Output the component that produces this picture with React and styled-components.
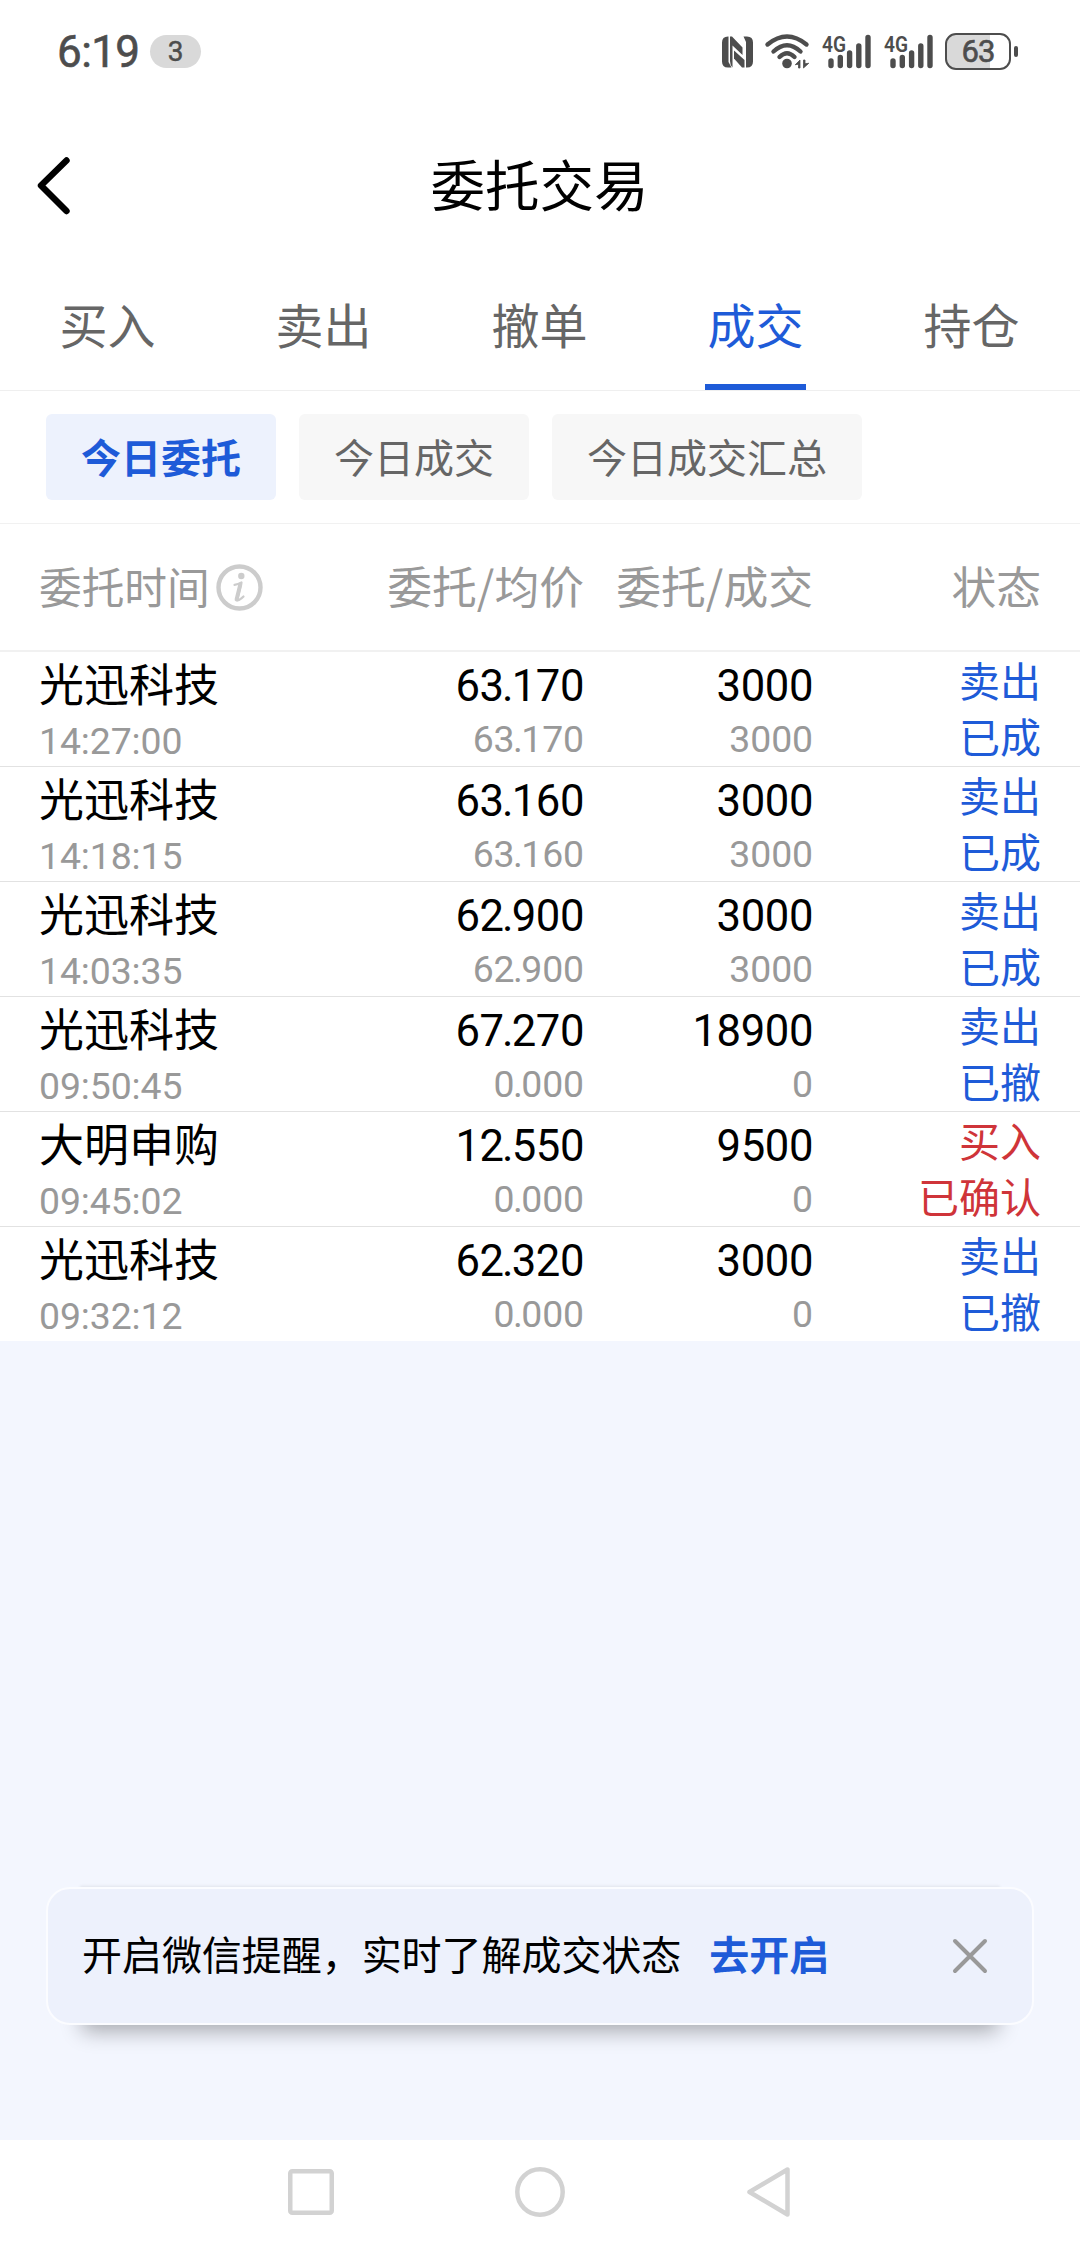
import React from "react";
import styled, { createGlobalStyle } from "styled-components";

const BLUE = "#1e5bd8";
const RED = "#cf3439";

const GlobalStyle = createGlobalStyle`
  * { box-sizing: border-box; }
  html, body { margin: 0; padding: 0; background: #fff; }
  body { font-family: "Noto Sans CJK SC", sans-serif; color: #000; }
  svg { display: block; flex: none; overflow: visible; }
`;

const Screen = styled.div`
  width: 1080px;
  height: 2244px;
  display: flex;
  flex-direction: column;
  background: #fff;
  overflow: hidden;
`;

const StatusBar = styled.header`
  height: 103px;
  flex: none;
  display: flex;
  align-items: center;
  padding: 0 62px 0 57px;
  color: #4d4d4d;
  font-family: Roboto, sans-serif;
`;

const Clock = styled.span`
  width: 93px;
  font-size: 44px;
  line-height: 50px;
  -webkit-text-stroke: 0.6px #4d4d4d;
  letter-spacing: -0.6px;
`;

const CountPill = styled.span`
  width: 51px;
  height: 33px;
  border-radius: 17px;
  background: #d9d9d9;
  font-size: 28px;
  line-height: 34px;
  -webkit-text-stroke: 0.4px #4d4d4d;
  text-align: center;
`;

const StatusIcons = styled.div`
  margin-left: auto;
  display: flex;
  align-items: center;
`;

const Battery = styled.div`
  display: flex;
  align-items: center;
  gap: 3px;
`;

const BatteryBody = styled.div`
  width: 66px;
  height: 37px;
  border: 2.6px solid #4d4d4d;
  border-radius: 11px;
  background: linear-gradient(90deg, #d9d9d9 43px, #fff 43px);
  font-size: 31px;
  line-height: 33px;
  -webkit-text-stroke: 0.6px #4d4d4d;
  text-align: center;
  letter-spacing: -0.8px;
`;

const BatteryNub = styled.div`
  width: 4px;
  height: 11px;
  border-radius: 2px;
  background: #4d4d4d;
`;

const TitleBar = styled.div`
  height: 166px;
  flex: none;
  display: grid;
  grid-template-columns: 100px 1fr 100px;
  align-items: center;
  padding: 0 0 1px;
`;

const BackButton = styled.div`
  padding-left: 34px;
`;

const Title = styled.h1`
  margin: 0;
  padding: 0 1px 5px 0;
  font-size: 54.5px;
  line-height: 60px;
  font-weight: 400;
  text-align: center;
`;

const Tabs = styled.nav`
  height: 122px;
  flex: none;
  display: grid;
  grid-template-columns: repeat(5, 1fr);
  border-bottom: 1px solid #efefef;
`;

const Tab = styled.div`
  display: flex;
  flex-direction: column;
  align-items: center;
  justify-content: space-between;
  padding: 23px 1px 0 0;
  font-size: 48px;
  line-height: 62px;
  color: ${(p) => (p.$active ? BLUE : "#666")};
  &::after {
    content: "";
    width: 101px;
    height: 6px;
    background: ${(p) => (p.$active ? BLUE : "transparent")};
  }
`;

const Filters = styled.div`
  height: 133px;
  flex: none;
  display: flex;
  align-items: center;
  gap: 23px;
  padding-left: 46px;
  border-bottom: 1px solid #f1f1f1;
`;

const Chip = styled.div`
  height: 86px;
  padding: 0 35px;
  border-radius: 6px;
  font-size: 40px;
  line-height: 84px;
  font-weight: ${(p) => (p.$active ? 700 : 400)};
  color: ${(p) => (p.$active ? BLUE : "#666")};
  background: ${(p) => (p.$active ? "#edf2fd" : "#f7f7f7")};
`;

const rowGrid = `
  display: grid;
  grid-template-columns: 300px 245px 229px 1fr;
  padding: 0 39px 0 39px;
  flex: none;
`;

const TableHead = styled.div`
  ${rowGrid}
  height: 128px;
  align-items: center;
  border-bottom: 2px solid #f1f1f1;
  font-size: 44.8px;
  line-height: 60px;
  color: #999;
`;

const HeadCell = styled.div`
  text-align: right;
  white-space: nowrap;
  padding-bottom: 5px;
`;

const TimeHead = styled.div`
  display: flex;
  align-items: center;
  gap: 6px;
  font-size: 42.7px;
  white-space: nowrap;
`;

const TimeHeadLabel = styled.span`
  padding-bottom: 4px;
`;

const Row = styled.div`
  ${rowGrid}
  height: ${(p) => (p.$last ? 114 : 115)}px;
  border-bottom: ${(p) => (p.$last ? 0 : 1)}px solid #e2e2e2;
  white-space: nowrap;
`;

const NameCell = styled.div`
  display: flex;
  flex-direction: column;
  gap: 14px;
  padding-top: 9px;
`;

const NumberCell = styled.div`
  display: flex;
  flex-direction: column;
  align-items: flex-end;
  gap: 7.5px;
  padding-top: 13px;
`;

const StatusCell = styled.div`
  display: flex;
  flex-direction: column;
  align-items: flex-end;
  gap: 12px;
  padding-top: 5px;
  font-size: 41px;
  line-height: 44px;
  color: ${(p) => (p.$buy ? RED : BLUE)};
`;

const StockName = styled.span`
  font-size: 45px;
  line-height: 44px;
`;

const Big = styled.span`
  font-family: Roboto, sans-serif;
  font-size: 43.6px;
  line-height: 44px;
  letter-spacing: -0.4px;
`;

const Small = styled.span`
  font-family: Roboto, sans-serif;
  font-size: 37.4px;
  line-height: 44px;
  letter-spacing: -0.1px;
  color: #999;
`;

const Point = styled.span`
  margin: 0 -1.5px;
`;

const Body = styled.main`
  flex: 1;
  display: flex;
  flex-direction: column;
  justify-content: flex-end;
  padding: 0 46px 115px;
  background: #f3f6fe;
`;

const Banner = styled.div`
  height: 138px;
  display: flex;
  align-items: center;
  padding: 0 44px 0 34px;
  border: 2px solid #fbfcff;
  border-radius: 24px;
  background: #edf1fc;
  box-shadow: 0 42px 20px -36px rgba(0, 0, 0, 0.32),
    0 -35px 3px -34px rgba(0, 0, 0, 0.08);
  font-size: 40px;
  line-height: 56px;
  white-space: nowrap;
`;

const BannerText = styled.span`
  padding-bottom: 6px;
  letter-spacing: -0.05px;
`;

const BannerLink = styled.span`
  padding-bottom: 6px;
  margin-left: 28px;
  margin-right: auto;
  font-weight: 700;
  color: ${BLUE};
`;

const NavBar = styled.footer`
  height: 104px;
  flex: none;
  display: flex;
  align-items: center;
  justify-content: center;
  gap: 181px;
`;

const NfcIcon = () => (
  <svg width="31" height="32" viewBox="0 0 31 32">
    <path fill="#4d4d4d" d="M6 0.500H6.500V26L9.500 31.500H6Q0 31.500 0 25.500V6.500Q0 0.500 6 0.500Z" />
    <path fill="#4d4d4d" d="M8 0.500H10L20.500 11.500V19L10.500 9.500V31.500Q8 29 8 25Z" />
    <path fill="#4d4d4d" d="M12 14.500L22.500 24V31.500H20L12 22.500Z" />
    <path fill="#4d4d4d" d="M21.500 0.500H25Q31 0.500 31 6.500V25.500Q31 31.500 25 31.500H24V6Z" />
  </svg>
);

const WifiIcon = () => (
  <svg width="45" height="36" viewBox="0 0 45 36" fill="none" stroke="#4d4d4d" strokeWidth="4.400" strokeLinecap="round">
    <path d="M2.500 10.500Q22 -5.500 41.500 10.500" />
    <path d="M8.500 17.500Q22 5 35.500 17.500" />
    <path d="M14.500 23Q22 15.500 29.500 23" />
    <circle cx="22" cy="29.500" r="4.800" fill="#4d4d4d" stroke="none" />
    <path d="M30.500 30.500L35 26V34H33.500V30.500ZM43.500 29.500L38.500 34V26H40V29.500Z" fill="#4d4d4d" stroke="#4d4d4d" strokeWidth="0.800" />
  </svg>
);

const SignalIcon = () => (
  <svg width="51" height="36" viewBox="0 0 51 36">
    <text x="1" y="18" fontFamily="Roboto, sans-serif" fontWeight="600" fontSize="22.500" textLength="24" lengthAdjust="spacingAndGlyphs" fill="#4d4d4d">4G</text>
    <g stroke="#4d4d4d" strokeWidth="5.400" strokeLinecap="round">
      <path d="M10 27V31.500M19.300 23.500V31.500M28.600 19V31.500M37.800 12V31.500M47 3.500V31.500" />
    </g>
  </svg>
);

const InfoIcon = () => (
  <svg width="47" height="47" viewBox="0 0 47 47" fill="none" stroke="#ccc" strokeLinecap="round" strokeLinejoin="round">
    <circle cx="23.500" cy="23.500" r="21" strokeWidth="4.400" />
    <circle cx="25.300" cy="12" r="3.200" fill="#ccc" stroke="none" />
    <path d="M18.500 20.800Q22 20.300 25.500 18.500L21.500 34.500Q20.500 37.200 23 36Q25.500 34.700 27.500 32.500" strokeWidth="2.200" />
    <path d="M24.300 20.500L20.600 35.500" strokeWidth="4" />
  </svg>
);

const TABS = ["买入", "卖出", "撤单", "成交", "持仓"];
const FILTERS = ["今日委托", "今日成交", "今日成交汇总"];
const ORDERS = [
  { name: "光迅科技", time: "14:27:00", price: "63.170", avg: "63.170", qty: "3000", done: "3000", side: "卖出", state: "已成" },
  { name: "光迅科技", time: "14:18:15", price: "63.160", avg: "63.160", qty: "3000", done: "3000", side: "卖出", state: "已成" },
  { name: "光迅科技", time: "14:03:35", price: "62.900", avg: "62.900", qty: "3000", done: "3000", side: "卖出", state: "已成" },
  { name: "光迅科技", time: "09:50:45", price: "67.270", avg: "0.000", qty: "18900", done: "0", side: "卖出", state: "已撤" },
  { name: "大明申购", time: "09:45:02", price: "12.550", avg: "0.000", qty: "9500", done: "0", side: "买入", state: "已确认" },
  { name: "光迅科技", time: "09:32:12", price: "62.320", avg: "0.000", qty: "3000", done: "0", side: "卖出", state: "已撤" },
];

const IconGap = styled.div`
  width: ${(p) => p.$w}px;
`;

const Decimal = ({ value }) => {
  const [whole, fraction] = value.split(".");
  return (
    <>
      {whole}
      <Point>.</Point>
      {fraction}
    </>
  );
};

export default function App() {
  return (
    <Screen>
      <GlobalStyle />
      <StatusBar>
        <Clock>6:19</Clock>
        <CountPill>3</CountPill>
        <StatusIcons>
          <NfcIcon />
          <IconGap $w={12} />
          <WifiIcon />
          <IconGap $w={11} />
          <SignalIcon />
          <IconGap $w={11} />
          <SignalIcon />
          <IconGap $w={11} />
          <Battery>
            <BatteryBody>63</BatteryBody>
            <BatteryNub />
          </Battery>
        </StatusIcons>
      </StatusBar>

      <TitleBar>
        <BackButton>
          <svg width="38" height="60" viewBox="0 0 38 60" fill="none" stroke="#000" strokeWidth="6.400" strokeLinecap="round" strokeLinejoin="round">
            <path d="M32.500 4.500L7 29.500L32.500 55" />
          </svg>
        </BackButton>
        <Title>委托交易</Title>
      </TitleBar>

      <Tabs>
        {TABS.map((t) => (
          <Tab key={t} $active={t === "成交"}>{t}</Tab>
        ))}
      </Tabs>

      <Filters>
        {FILTERS.map((f, i) => (
          <Chip key={f} $active={i === 0}>{f}</Chip>
        ))}
      </Filters>

      <TableHead>
        <TimeHead>
          <TimeHeadLabel>委托时间</TimeHeadLabel>
          <InfoIcon />
        </TimeHead>
        <HeadCell>委托/均价</HeadCell>
        <HeadCell>委托/成交</HeadCell>
        <HeadCell>状态</HeadCell>
      </TableHead>

      {ORDERS.map((o, i) => (
        <Row key={o.time} $last={i === ORDERS.length - 1}>
          <NameCell>
            <StockName>{o.name}</StockName>
            <Small>{o.time}</Small>
          </NameCell>
          <NumberCell>
            <Big><Decimal value={o.price} /></Big>
            <Small><Decimal value={o.avg} /></Small>
          </NumberCell>
          <NumberCell>
            <Big>{o.qty}</Big>
            <Small>{o.done}</Small>
          </NumberCell>
          <StatusCell $buy={o.side === "买入"}>
            <span>{o.side}</span>
            <span>{o.state}</span>
          </StatusCell>
        </Row>
      ))}

      <Body>
        <Banner>
          <BannerText>开启微信提醒，实时了解成交状态</BannerText>
          <BannerLink>去开启</BannerLink>
          <svg width="36" height="36" viewBox="0 0 36 36" stroke="#999" strokeWidth="4" strokeLinecap="round">
            <path d="M3 3L33 33M33 3L3 33" />
          </svg>
        </Banner>
      </Body>

      <NavBar>
        <svg width="46" height="46" viewBox="0 0 46 46" fill="none" stroke="#d2d2d2" strokeWidth="4.500">
          <rect x="2.250" y="2.250" width="41.500" height="41.500" rx="2" />
        </svg>
        <svg width="50" height="50" viewBox="0 0 50 50" fill="none" stroke="#d2d2d2" strokeWidth="4.500">
          <circle cx="25" cy="25" r="22.700" />
        </svg>
        <svg width="46" height="52" viewBox="0 0 46 52" fill="none" stroke="#d2d2d2" strokeWidth="4.500" strokeLinejoin="round">
          <path d="M41.500 3.500V48.500L3.500 26Z" />
        </svg>
      </NavBar>
    </Screen>
  );
}
